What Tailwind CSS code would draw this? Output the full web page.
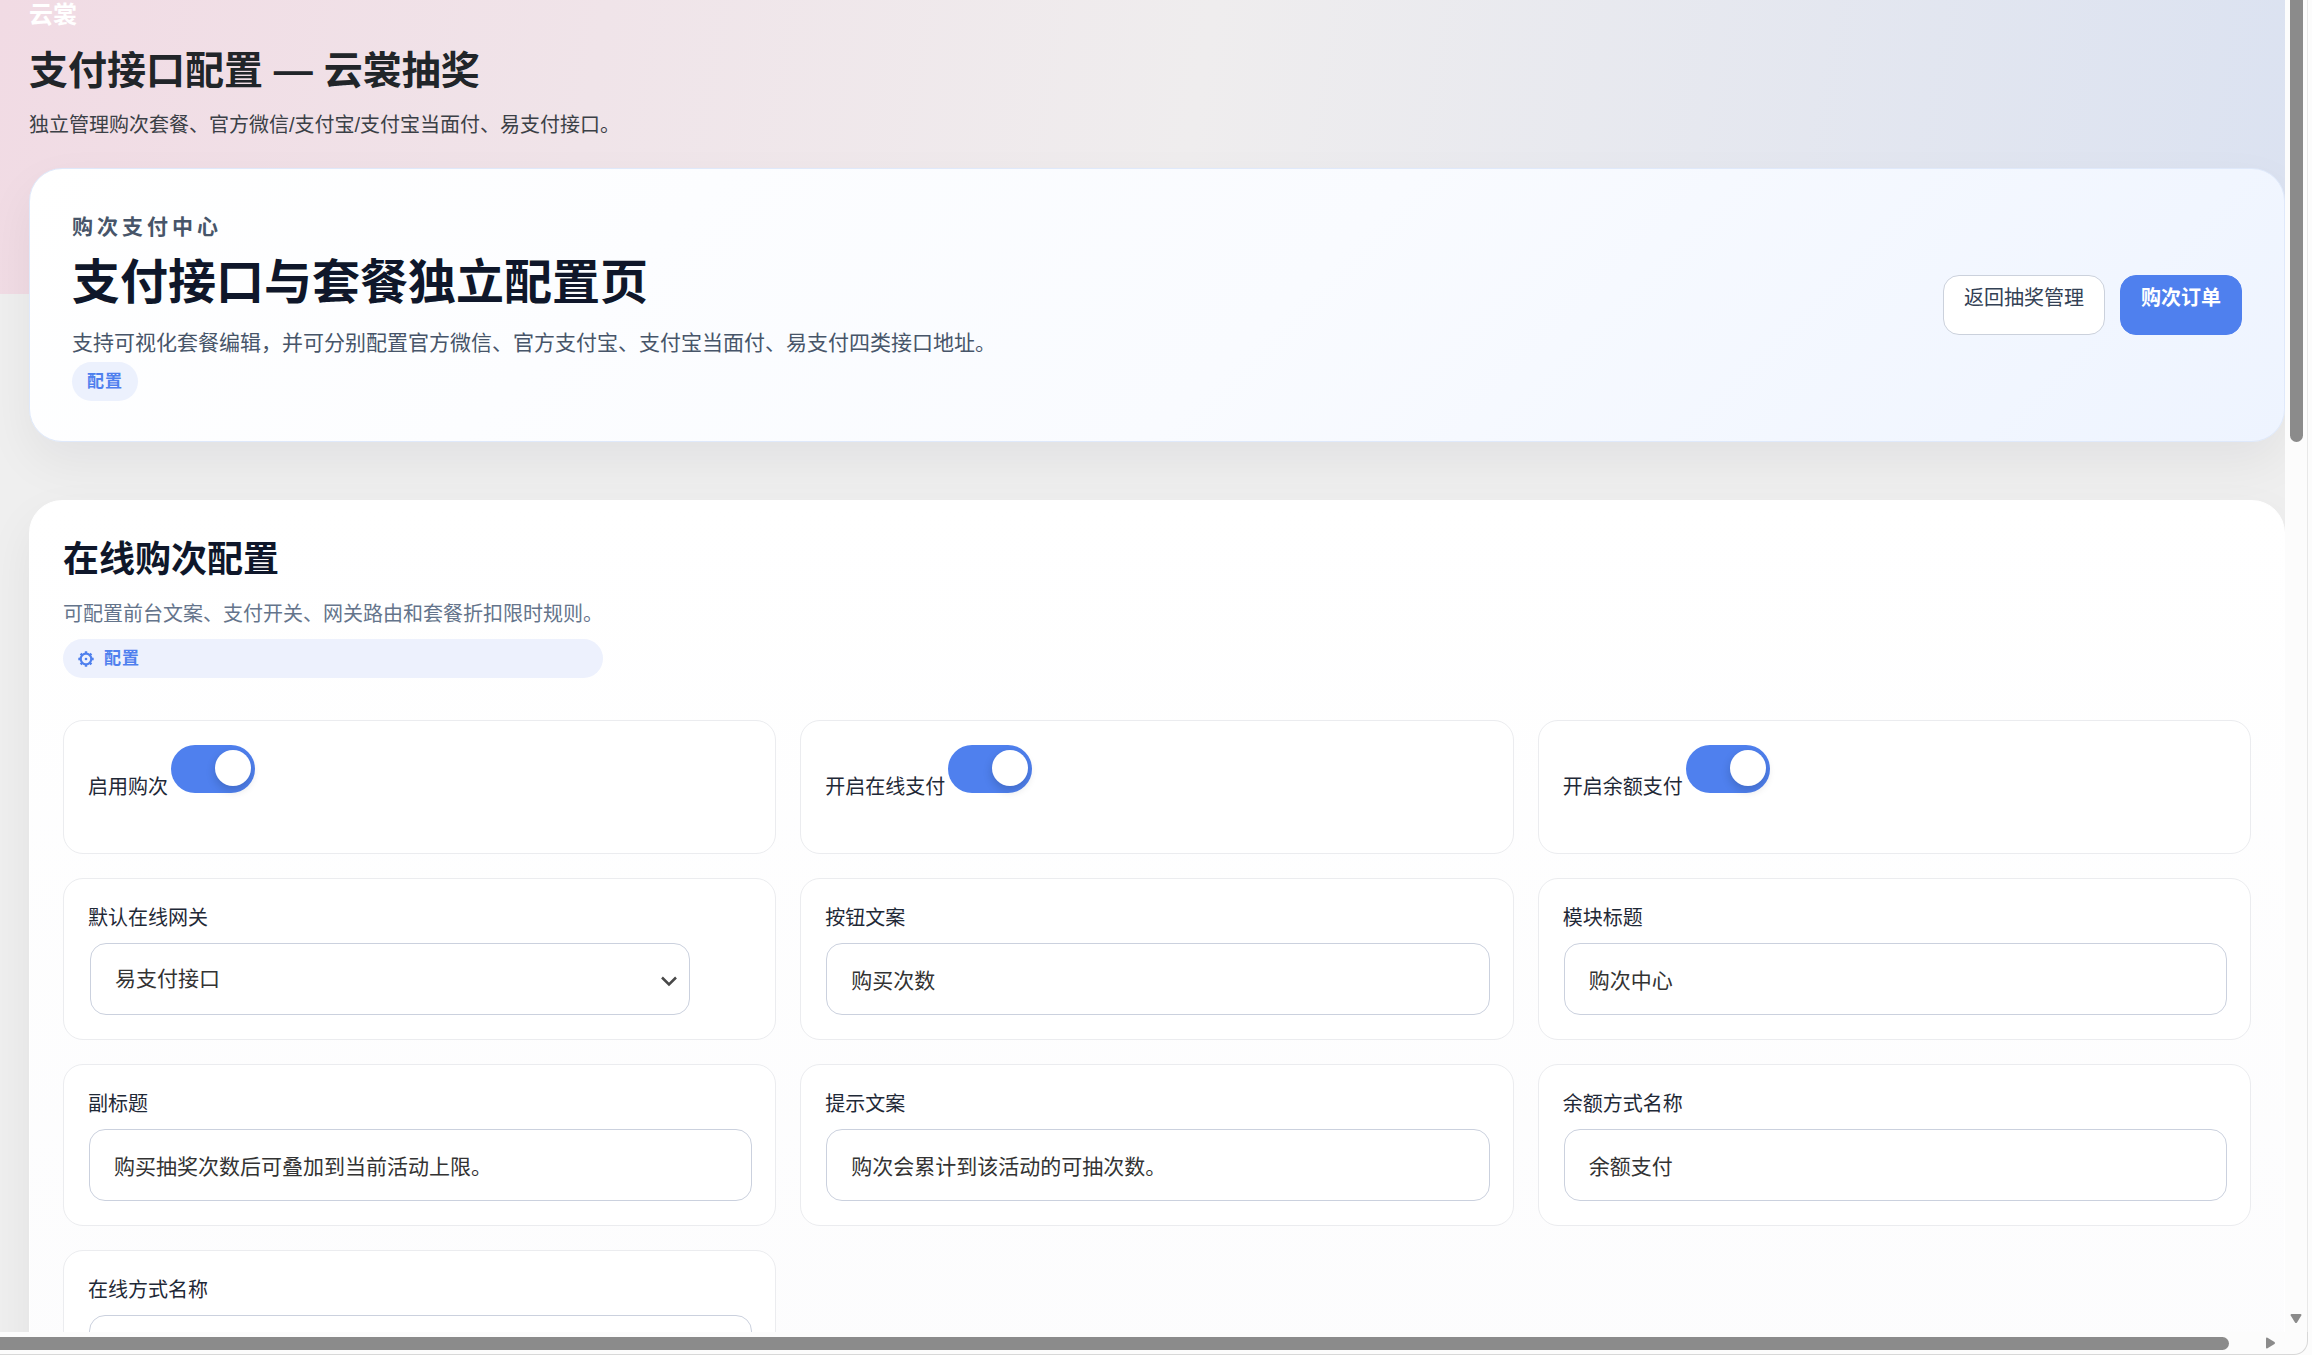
<!DOCTYPE html>
<html lang="zh-CN">
<head>
<meta charset="utf-8">
<title>支付接口配置 — 云裳抽奖</title>
<script src="https://cdn.jsdelivr.net/npm/@tailwindcss/browser@4"></script>
</head>
<body class="flex h-screen flex-col overflow-hidden bg-[#fcfcfc] font-['Liberation_Sans','Noto_Sans_CJK_SC',sans-serif] text-[#1f2937]">
  <div class="flex min-h-0 flex-1">
    <main class="min-w-0 flex-1 overflow-hidden bg-[#efefef] bg-[linear-gradient(100deg,#f1dbe4_0%,#efedee_52%,#dbe2f1_100%)] bg-[length:100%_294px] bg-no-repeat pl-[29px]">
      <header>
        <a href="#" class="block text-2xl leading-[30px] font-bold text-white">云裳</a>
        <h1 class="mt-4 text-[39px] leading-[50px] font-bold text-[#212529]">支付接口配置 — 云裳抽奖</h1>
        <p class="mt-[15px] text-xl leading-7 text-[#3b4046]">独立管理购次套餐、官方微信/支付宝/支付宝当面付、易支付接口。</p>
      </header>

      <section class="mt-[29px] flex items-center justify-between rounded-[33px] border border-[#dfe9fb] bg-[linear-gradient(135deg,#ffffff_0%,#f9fbff_55%,#eef4ff_100%)] px-[42px] py-10 shadow-[0_20px_50px_rgba(20,20,30,0.06)]">
        <div class="pt-px">
          <p class="text-[21px] leading-[34px] font-semibold tracking-[4px] text-[#475569]">购次支付中心</p>
          <h2 class="mt-[9px] text-5xl leading-[60px] font-bold text-[#0f172a]">支付接口与套餐独立配置页</h2>
          <p class="mt-[14px] text-[21px] leading-8 text-[#475569]">支持可视化套餐编辑，并可分别配置官方微信、官方支付宝、支付宝当面付、易支付四类接口地址。</p>
          <span class="mt-[3px] flex h-[39px] w-fit items-center rounded-full bg-[#ecf1fd] px-[15px] pt-px text-[17px] font-bold tracking-[1px] text-[#4f80ee]">配置</span>
        </div>
        <nav class="flex gap-[15px]">
          <a href="#" class="h-[60px] rounded-2xl border border-[#cbd1dc] bg-white px-5 pt-2 text-xl leading-7 text-[#334155]">返回抽奖管理</a>
          <a href="#" class="h-[60px] rounded-2xl border border-[#4f80ee] bg-[#4f80ee] px-5 pt-2 text-xl leading-7 font-semibold text-white">购次订单</a>
        </nav>
      </section>

      <section class="mt-[58px] rounded-[33px] border border-white bg-[linear-gradient(180deg,#ffffff_0%,#fcfcfd_100%)] p-[33px] shadow-[0_20px_50px_rgba(20,20,30,0.06)]">
        <div class="w-fit">
          <h2 class="text-4xl leading-[52px] font-bold text-[#0f172a]">在线购次配置</h2>
          <p class="mt-[14px] text-xl leading-7 text-[#64748b]">可配置前台文案、支付开关、网关路由和套餐折扣限时规则。</p>
          <span class="mt-[11px] flex h-[39px] items-center gap-[10px] rounded-full bg-[#edf1fd] px-[15px] pt-px text-[17px] font-bold tracking-[1px] text-[#4f80ee]">
            <svg class="size-4" viewBox="0 0 16 16" fill="none" stroke="currentColor" aria-hidden="true">
              <circle cx="8" cy="8" r="5.300" stroke-width="2.200"/>
              <circle cx="8" cy="8" r="1.300" fill="currentColor" stroke="none"/>
              <path d="M8 .3v2.500M8 13.200v2.500M.3 8h2.500M13.200 8h2.500M2.600 2.600l1.500 1.500M11.900 11.900l1.500 1.500M2.600 13.400l1.500-1.500M11.900 4.100l1.500-1.500" stroke-width="2.400"/>
            </svg>
            配置
          </span>
        </div>

        <form class="mt-[42px] grid grid-cols-3 gap-6">
          <div class="flex h-[134px] gap-[3px] rounded-[20px] border border-[#ebecef] bg-white p-6">
            <label for="enable" class="mt-7 text-xl leading-7">启用购次</label>
            <input id="enable" type="checkbox" role="switch" checked class="h-12 w-[84px] appearance-none rounded-full bg-[#4f80ee] px-1 py-[5px] before:ml-auto before:block before:size-9 before:rounded-full before:bg-white before:shadow-[0_4px_10px_rgba(15,23,42,0.2)]">
          </div>
          <div class="flex h-[134px] gap-[3px] rounded-[20px] border border-[#ebecef] bg-white p-6">
            <label for="online" class="mt-7 text-xl leading-7">开启在线支付</label>
            <input id="online" type="checkbox" role="switch" checked class="h-12 w-[84px] appearance-none rounded-full bg-[#4f80ee] px-1 py-[5px] before:ml-auto before:block before:size-9 before:rounded-full before:bg-white before:shadow-[0_4px_10px_rgba(15,23,42,0.2)]">
          </div>
          <div class="flex h-[134px] gap-[3px] rounded-[20px] border border-[#ebecef] bg-white p-6">
            <label for="balance" class="mt-7 text-xl leading-7">开启余额支付</label>
            <input id="balance" type="checkbox" role="switch" checked class="h-12 w-[84px] appearance-none rounded-full bg-[#4f80ee] px-1 py-[5px] before:ml-auto before:block before:size-9 before:rounded-full before:bg-white before:shadow-[0_4px_10px_rgba(15,23,42,0.2)]">
          </div>

          <div class="rounded-[20px] border border-[#ebecef] bg-white p-6">
            <label for="gateway" class="block text-xl leading-[30px]">默认在线网关</label>
            <div class="relative mt-[10px] ml-0.5 w-[600px] max-w-full">
              <select id="gateway" class="block h-[72px] w-full appearance-none rounded-2xl border border-[#cbd1de] bg-white px-6 text-[21px] text-[#333]"><option>易支付接口</option></select>
              <svg class="pointer-events-none absolute top-8 right-3 h-3 w-[18px]" viewBox="0 0 18 12" fill="none" stroke="#484848" stroke-width="2.500" aria-hidden="true"><path d="M2 2.500l7 7 7-7"/></svg>
            </div>
          </div>
          <div class="rounded-[20px] border border-[#ebecef] bg-white p-6">
            <label for="btn-text" class="block text-xl leading-[30px]">按钮文案</label>
            <input id="btn-text" type="text" value="购买次数" class="mt-[10px] ml-px block h-[72px] w-full rounded-2xl border border-[#cbd1de] bg-white px-6 text-[21px] text-[#333]">
          </div>
          <div class="rounded-[20px] border border-[#ebecef] bg-white p-6">
            <label for="module" class="block text-xl leading-[30px]">模块标题</label>
            <input id="module" type="text" value="购次中心" class="mt-[10px] ml-px block h-[72px] w-full rounded-2xl border border-[#cbd1de] bg-white px-6 text-[21px] text-[#333]">
          </div>

          <div class="rounded-[20px] border border-[#ebecef] bg-white p-6">
            <label for="subtitle" class="block text-xl leading-[30px]">副标题</label>
            <input id="subtitle" type="text" value="购买抽奖次数后可叠加到当前活动上限。" class="mt-[10px] ml-px block h-[72px] w-full rounded-2xl border border-[#cbd1de] bg-white px-6 text-[21px] text-[#333]">
          </div>
          <div class="rounded-[20px] border border-[#ebecef] bg-white p-6">
            <label for="tip" class="block text-xl leading-[30px]">提示文案</label>
            <input id="tip" type="text" value="购次会累计到该活动的可抽次数。" class="mt-[10px] ml-px block h-[72px] w-full rounded-2xl border border-[#cbd1de] bg-white px-6 text-[21px] text-[#333]">
          </div>
          <div class="rounded-[20px] border border-[#ebecef] bg-white p-6">
            <label for="balance-name" class="block text-xl leading-[30px]">余额方式名称</label>
            <input id="balance-name" type="text" value="余额支付" class="mt-[10px] ml-px block h-[72px] w-full rounded-2xl border border-[#cbd1de] bg-white px-6 text-[21px] text-[#333]">
          </div>

          <div class="rounded-[20px] border border-[#ebecef] bg-white p-6">
            <label for="online-name" class="block text-xl leading-[30px]">在线方式名称</label>
            <input id="online-name" type="text" class="mt-[10px] ml-px block h-[72px] w-full rounded-2xl border border-[#cbd1de] bg-white px-6 text-[21px] text-[#333]">
          </div>
        </form>
      </section>
    </main>

    <!-- Vertical scroll track -->
    <div class="mr-1 flex w-[23px] flex-col items-center justify-between border-r border-[#e8e8e8] bg-[#fcfcfc] pb-2">
      <div class="h-[442px] w-[13px] rounded-b-full bg-[#8b8b8b]"></div>
      <svg class="h-[10px] w-[12px]" viewBox="0 0 12 10" fill="#8b8b8b" aria-hidden="true"><path d="M1.500 0h9q1.500 0 .8 1.500L7 8.500q-1 1.200-2 0L.7 1.500Q0 0 1.500 0z"/></svg>
    </div>
  </div>

  <!-- Horizontal scroll track -->
  <div class="mr-1 flex h-[23px] items-center justify-between rounded-br-[14px] border-r border-b border-[#d8d8d8] bg-[#fcfcfc] pr-[31px]">
    <div class="mr-[37px] h-[13px] flex-1 rounded-r-full bg-[#8b8b8b]"></div>
    <svg class="h-[12px] w-[10px]" viewBox="0 0 10 12" fill="#8b8b8b" aria-hidden="true"><path d="M0 1.500v9q0 1.500 1.500.8L8.500 7q1.200-1 0-2L1.500.7Q0 0 0 1.500z"/></svg>
  </div>
</body>
</html>
